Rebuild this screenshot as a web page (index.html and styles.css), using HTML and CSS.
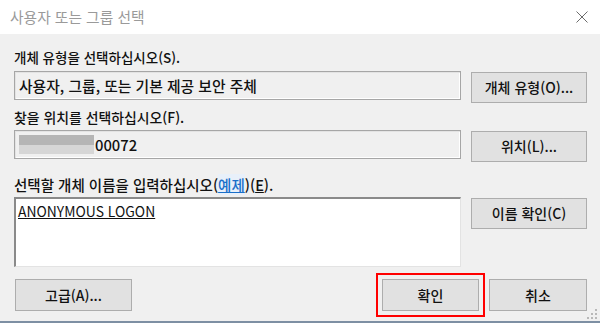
FILE: index.html
```html
<!DOCTYPE html>
<html lang="ko">
<head>
<meta charset="utf-8">
<title>사용자 또는 그룹 선택</title>
<link rel="stylesheet" href="styles.css">
</head>
<body>
<div class="window">
  <div class="titlebar">
    <span class="title">사용자 또는 그룹 선택</span>
    <svg class="close" width="12" height="12" viewBox="0 0 12 12"><path d="M0.5 0.5 L11.5 11.5 M11.5 0.5 L0.5 11.5" stroke="#6b6b6b" stroke-width="1" fill="none"/></svg>
  </div>
  <div class="content">
    <div class="label l1">개체 유형을 선택하십시오(S).</div>
    <div class="row r1">
      <div class="field readonly">사용자, 그룹, 또는 기본 제공 보안 주체</div>
      <button class="btn side">개체 유형(O)...</button>
    </div>
    <div class="label l2">찾을 위치를 선택하십시오(F).</div>
    <div class="row r2">
      <div class="field readonly"><span class="redact"></span>00072</div>
      <button class="btn side">위치(L)...</button>
    </div>
    <div class="label l3">선택할 개체 이름을 입력하십시오(<a class="link">예제</a>)(<u>E</u>).</div>
    <div class="row r3">
      <div class="area"><u>ANONYMOUS LOGON</u></div>
      <button class="btn side">이름 확인(C)</button>
    </div>
    <div class="footer">
      <button class="btn adv">고급(A)...</button>
      <div class="spacer"></div>
      <div class="okwrap"><button class="btn ok">확인</button></div>
      <button class="btn cancel">취소</button>
    </div>
  </div>
  <div class="bottomline"></div>
  <svg class="grip" width="10" height="10" viewBox="0 0 10 10">
    <rect x="8" y="0" width="2" height="2" fill="#b8b8b8"/>
    <rect x="4" y="4" width="2" height="2" fill="#b8b8b8"/>
    <rect x="8" y="4" width="2" height="2" fill="#b8b8b8"/>
    <rect x="0" y="8" width="2" height="2" fill="#b8b8b8"/>
    <rect x="4" y="8" width="2" height="2" fill="#b8b8b8"/>
    <rect x="8" y="8" width="2" height="2" fill="#b8b8b8"/>
  </svg>
</div>
</body>
</html>
```
FILE: styles.css
```css
* { box-sizing: border-box; }
html, body { margin: 0; padding: 0; }
body {
  width: 600px;
  height: 323px;
  overflow: hidden;
  font-family: "Noto Sans CJK KR", "Noto Sans", sans-serif;
  font-size: 13.5px;
  font-weight: 500;
  color: #111;
  background: #f0f0f0;
}
.window {
  position: relative;
  width: 600px;
  height: 323px;
  display: flex;
  flex-direction: column;
  background: #f0f0f0;
}
.titlebar {
  height: 34px;
  background: #fff;
  display: flex;
  align-items: center;
  justify-content: space-between;
  padding: 0 12px 0 10px;
  flex: none;
}
.title {
  color: #9a9a9a;
  font-size: 14.75px;
  font-weight: 400;
  margin-top: -2px;
}
.close { margin-top: -1px; }
.content {
  flex: 1;
  padding: 0 13px 0 14px;
  display: flex;
  flex-direction: column;
}
.label {
  height: 16px;
  line-height: 16px;
  white-space: nowrap;
}
.l1 { margin-top: 15px; }
.l2 { margin-top: 6px; font-size: 13.9px; }
.l3 { margin-top: 15px; font-size: 14.5px; }
.row {
  display: flex;
  align-items: flex-start;
  gap: 10px;
}
.r1 { margin-top: 6px; }
.r2 { margin-top: 5px; }
.r3 { margin-top: 4px; }
.field {
  width: 447px;
  height: 29px;
  border: 1px solid #a6a6a6;
  box-shadow: inset 1px 1px 0 #e3e3e3, inset -1px -1px 0 #ffffff;
  background: #f0f0f0;
  padding: 4px 4px;
  font-size: 14.8px;
  line-height: 19px;
  white-space: nowrap;
  display: flex;
  align-items: center;
}
.redact {
  display: inline-block;
  width: 75px;
  height: 19px;
  margin-right: 1px;
  background: linear-gradient(#b5b5b5 0, #b5b5b5 55%, #d6d6d6 55%, #d6d6d6 100%);
}
.area {
  width: 447px;
  height: 70px;
  background: #fff;
  border-top: 2px solid #8a8a8a;
  border-left: 2px solid #8a8a8a;
  border-right: 1px solid #e3e3e3;
  border-bottom: 1px solid #e3e3e3;
  padding: 4px 2px;
  font-size: 13.9px;
  font-weight: 400;
  line-height: 16px;
  color: #111;
}
.btn {
  font: inherit;
  font-size: 14px;
  color: #111;
  background: #e1e1e1;
  border: 1px solid #adadad;
  border-radius: 0;
  padding: 0;
  height: 31px;
  line-height: 29px;
  text-align: center;
  margin: 0;
}
.side { width: 116px; margin-top: 1px; }
.footer {
  margin-top: 12px;
  display: flex;
  align-items: flex-start;
}
.adv { width: 117px; margin-left: 1px; height: 32px; }
.spacer { flex: 1; }
.okwrap {
  position: relative;
  width: 97px;
  height: 32px;
}
.ok { width: 97px; height: 32px; }
.okwrap::after {
  content: "";
  position: absolute;
  left: -6px;
  top: -6px;
  right: -6px;
  bottom: -6px;
  border: 2px solid #ff0000;
  pointer-events: none;
}
.cancel { width: 98px; height: 32px; margin-left: 10px; margin-right: 0; }
.link {
  color: #1a6fc9;
  text-decoration: underline;
  background: #e8f0fa;
}
.bottomline {
  position: absolute;
  left: 0;
  right: 0;
  bottom: 0;
  height: 2px;
  background: #7d8fa3;
}
.grip {
  position: absolute;
  right: 3px;
  bottom: 4px;
}
```
